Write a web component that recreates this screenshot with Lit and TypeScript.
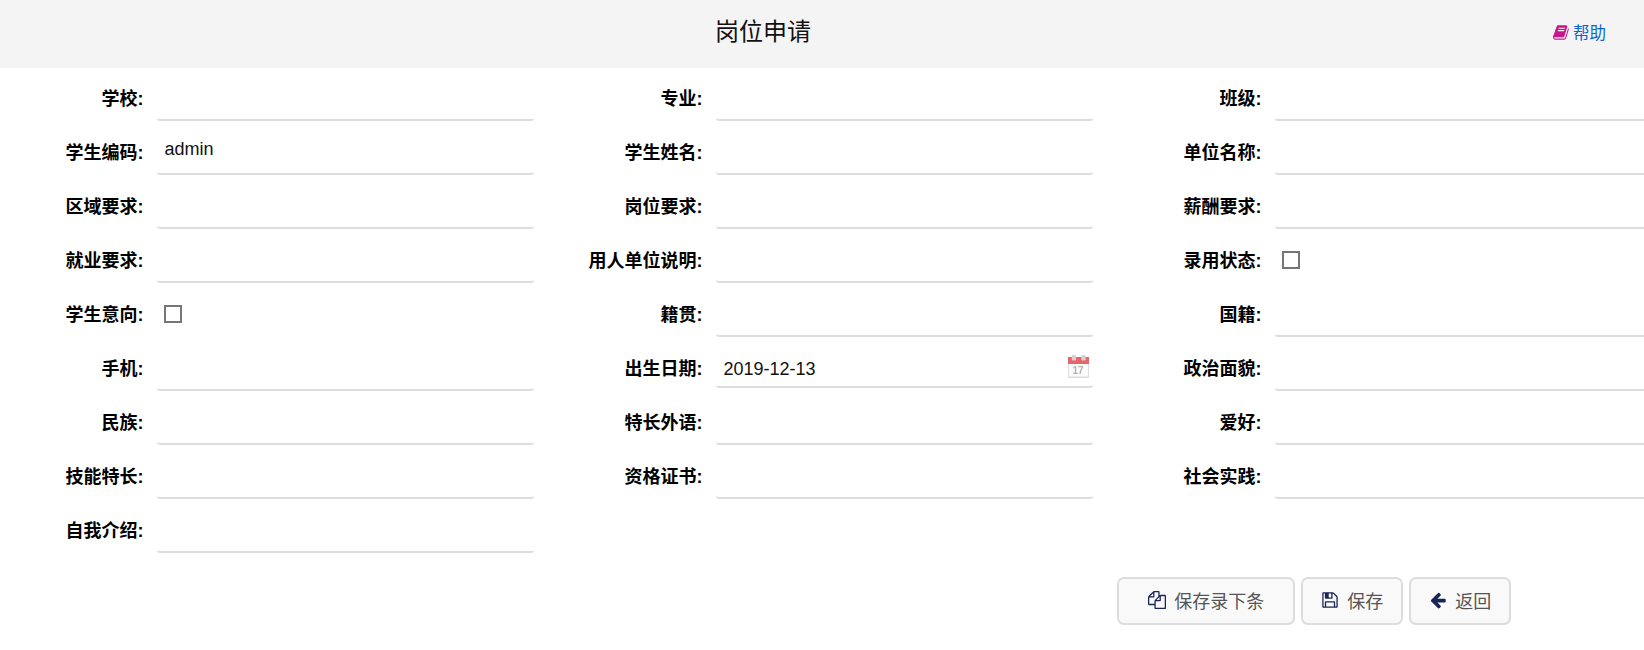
import { LitElement, html, css, svg } from "lit";
import { customElement } from "lit/decorators.js";

type F = { l: string; v?: string; t?: "check" | "date" };

const rows: (F | null)[][] = [
  [{ l: "学校" }, { l: "专业" }, { l: "班级" }],
  [{ l: "学生编码", v: "admin" }, { l: "学生姓名" }, { l: "单位名称" }],
  [{ l: "区域要求" }, { l: "岗位要求" }, { l: "薪酬要求" }],
  [{ l: "就业要求" }, { l: "用人单位说明" }, { l: "录用状态", t: "check" }],
  [{ l: "学生意向", t: "check" }, { l: "籍贯" }, { l: "国籍" }],
  [{ l: "手机" }, { l: "出生日期", t: "date", v: "2019-12-13" }, { l: "政治面貌" }],
  [{ l: "民族" }, { l: "特长外语" }, { l: "爱好" }],
  [{ l: "技能特长" }, { l: "资格证书" }, { l: "社会实践" }],
  [{ l: "自我介绍" }, null, null],
];

const icon = (d: string, cls: string) =>
  html`<svg class=${cls} viewBox="0 0 1792 1792" aria-hidden="true">${svg`<path fill="currentColor" d=${d}></path>`}</svg>`;

const BOOK =
  "M1639 478q40 57 18 129l-275 906q-19 64-76.5 107.5t-122.5 43.5h-923q-77 0-148.5-53.5t-99.5-131.5q-24-67-2-127 0-4 3-27t4-37q1-8-3-21.5t-3-19.5q2-11 8-21t16.5-23.5 16.5-23.5q23-38 45-91.5t30-91.5q3-10 .5-30t-.5-28q3-11 17-28t17-23q21-36 42-92t25-90q1-9-2.5-32t.5-28q4-13 22-30.5t22-22.5q19-26 42.5-84.5t27.5-96.5q1-8-3-25.5t-2-26.5q2-8 9-18t18-23 17-21q8-12 16.5-30.5t15-35 16-36 19.5-32 26.5-23.5 36-11.5 47.5 5.5l-1 3q38-9 51-9h761q74 0 114 56t18 130l-274 906q-36 119-71.5 153.5t-128.5 34.5h-869q-27 0-38 15-11 16-1 43 24 70 144 70h923q29 0 56-15.5t35-41.5l300-987q7-22 5-57 38 15 59 43zm-1064 2q-4 13 2 22.5t20 9.5h608q13 0 25.5-9.5t16.5-22.5l21-64q4-13-2-22.5t-20-9.5h-608q-13 0-25.5 9.5t-16.5 22.5zm-83 256q-4 13 2 22.5t20 9.5h608q13 0 25.5-9.5t16.5-22.5l21-64q4-13-2-22.5t-20-9.5h-608q-13 0-25.5 9.5t-16.5 22.5z";
const FILES =
  "M1696 384q40 0 68 28t28 68v1216q0 40-28 68t-68 28h-960q-40 0-68-28t-28-68v-288h-544q-40 0-68-28t-28-68v-672q0-40 20-88t48-76l408-408q28-28 76-48t88-20h416q40 0 68 28t28 68v328q68-40 128-40h416zm-544 213l-299 299h299v-299zm-640-384l-299 299h299v-299zm196 647l316-316v-416h-384v416q0 40-28 68t-68 28h-416v640h512v-256q0-40 20-88t48-76zm956 804v-1152h-384v416q0 40-28 68t-68 28h-416v640h896z";
const SAVE =
  "M512 1536h768v-384h-768v384zm896 0h128v-896q0-14-10-38.5t-20-34.5l-281-281q-10-10-34-20t-39-10v416q0 40-28 68t-68 28h-576q-40 0-68-28t-28-68v-416h-128v1280h128v-416q0-40 28-68t68-28h832q40 0 68 28t28 68v416zm-384-928v-320q0-13-9.5-22.5t-22.5-9.5h-192q-13 0-22.5 9.5t-9.5 22.5v320q0 13 9.5 22.5t22.5 9.5h192q13 0 22.5-9.5t9.5-22.5zm640 32v928q0 40-28 68t-68 28h-1344q-40 0-68-28t-28-68v-1344q0-40 28-68t68-28h928q40 0 88 20t76 48l280 280q28 28 48 76t20 88z";
const BACK =
  "M1664 896v128q0 53-32.5 90.5t-84.5 37.5h-704l293 294q38 36 38 90t-38 90l-75 76q-37 37-90 37-52 0-91-37l-651-652q-37-37-37-90 0-52 37-91l651-650q38-38 91-38 52 0 90 38l75 74q38 38 38 91t-38 91l-293 293h704q52 0 84.5 37.5t32.5 90.5z";

@customElement("app-root")
export class AppRoot extends LitElement {
  static styles = css`
    :host {
      display: block;
      width: 100%;
      height: 650px;
      overflow: hidden;
      background: #fff;
      font-family: "Liberation Sans", "Noto Sans CJK SC", sans-serif;
      color: #000;
    }
    .head {
      height: 68px;
      background: #f4f4f4;
      display: flex;
      align-items: center;
      padding: 0 38px 4px 715px;
      box-sizing: border-box;
    }
    .title {
      font-size: 24px;
      font-weight: 400;
      line-height: 32px;
      color: #111;
    }
    .help {
      margin-left: auto;
      display: flex;
      align-items: center;
      gap: 3px;
      font-size: 16.5px;
      color: #0a66d0;
    }
    .help-ico {
      width: 17px;
      height: 17px;
      color: #c7158c;
    }
    .form {
      display: grid;
      grid-template-columns: repeat(3, 559px);
      grid-auto-rows: 54px;
    }
    .field {
      display: flex;
      align-items: flex-start;
    }
    .label {
      width: 143.5px;
      flex: none;
      text-align: right;
      font-size: 18px;
      font-weight: 700;
      line-height: 26px;
      padding-top: 18px;
      white-space: nowrap;
      color: #000;
    }
    .box {
      position: relative;
      width: 377.5px;
      margin-left: 13px;
      flex: none;
    }
    .input {
      display: block;
      width: 100%;
      height: 53px;
      box-sizing: border-box;
      border: 0;
      border-bottom: 2px solid #ddd;
      border-radius: 3px;
      background: transparent;
      padding: 3px 7px 0 8px;
      margin: 0;
      outline: none;
      font: 400 18px "Liberation Sans", "Noto Sans CJK SC", sans-serif;
      color: #111;
    }
    .input.date {
      height: 50px;
      padding: 14px 7px 0 8px;
    }
    .cal {
      position: absolute;
      right: 4px;
      top: 17px;
      width: 21px;
      height: 23px;
      filter: blur(0.5px);
    }
    .check {
      appearance: none;
      display: block;
      width: 18px;
      height: 18px;
      margin: 21px 0 0 7.5px;
      box-sizing: border-box;
      border: 2px solid #767676;
      border-radius: 0;
      background: #fff;
    }
    .actions {
      display: flex;
      justify-content: flex-end;
      gap: 6px;
      padding: 23px 133px 0 0;
    }
    .btn {
      height: 48px;
      box-sizing: border-box;
      border: 2px solid #ddd;
      border-radius: 7px;
      background: #f9f9f9;
      display: flex;
      align-items: center;
      justify-content: center;
      gap: 8.5px;
      padding: 0 0 2px;
      font: 400 18px "Liberation Sans", "Noto Sans CJK SC", sans-serif;
      color: #555;
    }
    .b1 {
      width: 178px;
    }
    .b2 {
      width: 102px;
    }
    .b3 {
      width: 102px;
    }
    .ico {
      width: 18px;
      height: 18px;
      color: #1a2456;
    }
  `;

  private field(f: F | null) {
    if (!f) return html`<div></div>`;
    let control;
    if (f.t === "check") {
      control = html`<input class="check" type="checkbox" />`;
    } else if (f.t === "date") {
      control = html`<input class="input date" .value=${f.v ?? ""} />
        <svg class="cal" viewBox="0 0 22 23" preserveAspectRatio="none" aria-hidden="true">
          <rect x="0" y="2" width="22" height="21" rx="1" fill="#dcdcdc"></rect>
          <rect x="1" y="9" width="20" height="12.5" fill="#fbfbfb"></rect>
          <rect x="0" y="2" width="22" height="7" fill="#e8656b"></rect>
          <rect x="4" y="0" width="4.5" height="5.5" rx="1" fill="#d6d2d2"></rect>
          <rect x="14" y="0" width="4.5" height="5.5" rx="1" fill="#d6d2d2"></rect>
          <text x="10.5" y="19.5" font-size="10.5" font-weight="700" text-anchor="middle" fill="#b4b4b4" font-family="Liberation Sans">17</text>
        </svg>`;
    } else {
      control = html`<input class="input" .value=${f.v ?? ""} />`;
    }
    return html`<div class="field">
      <div class="label">${f.l}:</div>
      <div class="box">${control}</div>
    </div>`;
  }

  render() {
    return html`
      <div class="head">
        <div class="title">岗位申请</div>
        <div class="help">${icon(BOOK, "help-ico")}<span>帮助</span></div>
      </div>
      <div class="form">${rows.flat().map((f) => this.field(f))}</div>
      <div class="actions">
        <button class="btn b1">${icon(FILES, "ico")}<span>保存录下条</span></button>
        <button class="btn b2">${icon(SAVE, "ico")}<span>保存</span></button>
        <button class="btn b3">${icon(BACK, "ico")}<span>返回</span></button>
      </div>
    `;
  }
}
